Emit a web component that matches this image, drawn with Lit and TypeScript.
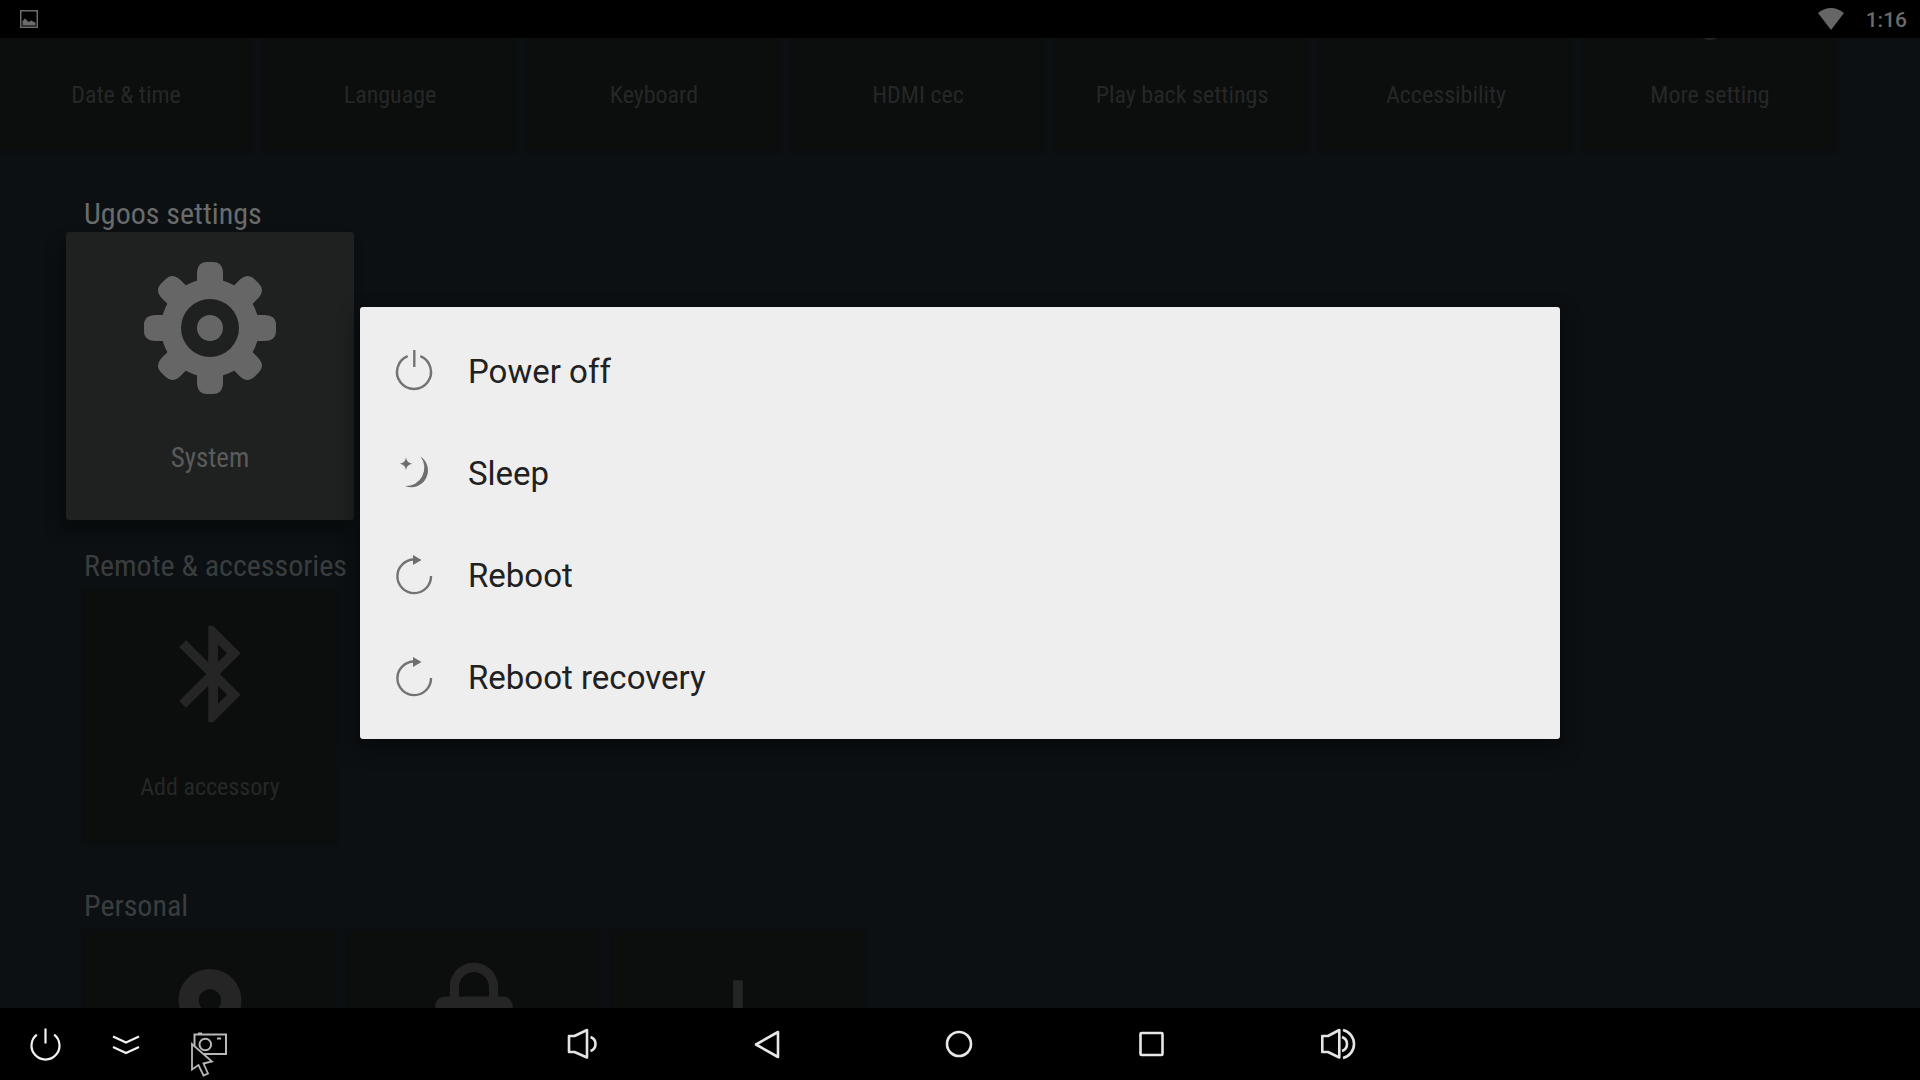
import { LitElement, html, css, svg } from "lit";
import { customElement, state } from "lit/decorators.js";

interface Card {
  label: string;
  icon?: string;
}

const cardIcons: Record<string, unknown> = {
  more: svg`<svg viewBox="0 0 116 116"><circle cx="58" cy="15" r="15"/><circle cx="58" cy="58" r="15"/><circle cx="58" cy="101" r="15"/></svg>`,
  gear: svg`<svg viewBox="-66 -66 132 132">
    <path fill-rule="evenodd" d="M0-49A49 49 0 0 1 0 49A49 49 0 0 1 0-49ZM0-29A29 29 0 0 0 0 29A29 29 0 0 0 0-29Z"/>
    ${[0, 45, 90, 135, 180, 225, 270, 315].map(
      (a) => svg`<path transform="rotate(${a})" d="M-13-43V-54Q-13-66-3-66H3Q13-66 13-54V-43Z"/>`
    )}
    <circle r="13"/></svg>`,
  bluetooth: svg`<svg viewBox="-0.64 0 24 24"><path d="M17.71 7.71L12 2h-1v7.59L6.41 5 5 6.41 10.59 12 5 17.59 6.41 19 11 14.41V22h1l5.71-5.71-4.3-4.29 4.3-4.29zM13 5.83l1.88 1.88L13 9.59V5.83zm1.88 10.46L13 18.17v-3.76l1.88 1.88z"/></svg>`,
  place: svg`<svg viewBox="-0.9 -0.9 25.8 25.8"><path d="M12 2C8.13 2 5 5.13 5 9c0 5.25 7 13 7 13s7-7.75 7-13c0-3.87-3.13-7-7-7zm0 9.5c-1.38 0-2.5-1.12-2.5-2.5s1.12-2.5 2.5-2.5 2.5 1.12 2.5 2.5-1.12 2.5-2.5 2.5z"/></svg>`,
  lock: svg`<svg viewBox="0 -0.4 24 24"><path d="M18 8h-1V6c0-2.76-2.24-5-5-5S7 3.24 7 6v2H6c-1.1 0-2 .9-2 2v10c0 1.1.9 2 2 2h12c1.1 0 2-.9 2-2V10c0-1.1-.9-2-2-2zM12 17c-1.1 0-2-.9-2-2s.9-2 2-2 2 .9 2 2-.9 2-2 2zm3.1-9H8.9V6c0-1.71 1.39-3.1 3.1-3.1 1.71 0 3.1 1.39 3.1 3.1v2z"/></svg>`,
  plus: svg`<svg viewBox="0 0 24 24"><path d="M19 13h-6v6h-2v-6H5v-2h6V5h2v6h6v2z"/></svg>`,
};

const rebootIcon = svg`<svg viewBox="0 0 48 48"><path class="line" d="M24 9.5A16.8 16.8 0 1 0 41 26"/><path class="solid" d="M23 5L31.5 10L23 15Z"/></svg>`;

const powerItems = [
  {
    label: "Power off",
    icon: svg`<svg viewBox="0 0 48 48"><path class="line" d="M17.7 10.2A17 17 0 1 0 30.3 10.2M24.3 4V21"/></svg>`,
  },
  {
    label: "Sleep",
    icon: svg`<svg viewBox="0 0 48 48"><path class="solid" d="M30.5 8.5A16.75 16.75 0 0 1 15 38A18.3 18.3 0 0 0 30.5 8.5ZM16 9.5Q16.8 14.9 22.2 15.7Q16.8 16.5 16 22Q15.2 16.5 9.8 15.7Q15.2 14.9 16 9.5Z"/></svg>`,
  },
  { label: "Reboot", icon: rebootIcon },
  { label: "Reboot recovery", icon: rebootIcon },
];

const toolButtons = [
  {
    label: "Power menu",
    icon: svg`<svg viewBox="0 0 48 48"><path d="M15.8 14.6A14 14 0 1 0 33.2 14.6M24.5 8.5V23.5"/></svg>`,
  },
  {
    label: "Hide bar",
    icon: svg`<svg viewBox="0 0 48 48"><path d="M10 16.5L23 22.5L36 16.5M10 27L23 33L36 27"/></svg>`,
  },
  {
    label: "Screenshot",
    icon: svg`<svg viewBox="0 0 48 48" class="dim"><path d="M9.5 14.5H41V34H9.5ZM13 13.5H17M32 18.5H36"/><circle cx="20.3" cy="24.5" r="5.8"/></svg>`,
  },
];

const navButtons = [
  {
    label: "Volume down",
    icon: svg`<svg viewBox="0 0 48 48" class="volume"><path d="M13 16H18.5L31 10V37.5L18.5 32H13ZM34.5 17A7.4 7.4 0 0 1 34.5 31"/></svg>`,
  },
  {
    label: "Back",
    icon: svg`<svg viewBox="0 0 48 48"><path class="key" d="M32 12V37L10 24.5Z"/></svg>`,
  },
  {
    label: "Home",
    icon: svg`<svg viewBox="0 0 48 48"><circle class="key" cx="23" cy="24" r="12"/></svg>`,
  },
  {
    label: "Recent apps",
    icon: svg`<svg viewBox="0 0 48 48"><rect class="key" x="14.5" y="13" width="22" height="22" rx="1"/></svg>`,
  },
  {
    label: "Volume up",
    icon: svg`<svg viewBox="0 0 48 48" class="volume"><path d="M6.3 16H12L23.3 10V37.5L12 32H6.3ZM26 17A7.4 7.4 0 0 1 26 31M27 10A14.4 14.4 0 0 1 27 38"/></svg>`,
  },
];

@customElement("app-root")
export class AppRoot extends LitElement {
  static styles = css`
    :host {
      display: block;
      font-family: Roboto, "Liberation Sans", sans-serif;
    }
    * {
      box-sizing: border-box;
    }
    button {
      border: 0;
      padding: 0;
      margin: 0;
      background: none;
      font: inherit;
      color: inherit;
      text-align: left;
    }
    svg {
      display: block;
    }
    .screen {
      display: grid;
      grid-template-rows: 38px minmax(0, 1fr) 72px;
      grid-template-columns: minmax(0, 1fr);
      height: 100vh;
      overflow: hidden;
      background: #0c1013;
    }
    .status {
      display: flex;
      align-items: center;
      gap: 22px;
      padding: 0 13px 0 20px;
      background: #000;
      color: #6b6b6b;
      font-size: 21px;
      font-weight: 500;
    }
    .status time {
      padding-top: 2px;
    }
    .shot {
      width: 18px;
      height: 18px;
      margin-right: auto;
    }
    .wifi {
      width: 26px;
      height: 22px;
    }
    .settings,
    .power {
      grid-row: 2;
      grid-column: 1;
    }
    .settings {
      overflow: hidden;
      font-family: "Roboto Condensed", "Liberation Sans Narrow", Roboto, sans-serif;
    }
    .row {
      display: flex;
      gap: 12px;
      padding-left: 84px;
    }
    .row.scrolled {
      margin-top: -140px;
      padding-left: 0;
    }
    .row.active {
      padding-left: 66px;
    }
    h2 {
      margin: 46px 0 6px 84px;
      font-size: 30px;
      line-height: 36px;
      font-weight: 400;
      color: #3a3d3e;
    }
    h2.active {
      margin-bottom: 0;
      color: #696b6c;
    }
    h2.after {
      margin-top: 28px;
    }
    .card {
      flex: none;
      display: flex;
      flex-direction: column;
      align-items: center;
      justify-content: flex-end;
      gap: 39px;
      width: 252px;
      height: 252px;
      padding-bottom: 39px;
      border-radius: 3px;
      background: #0b0e0d;
      box-shadow: -1px 1px 4px #0a0d0e;
      color: #262727;
      font-size: 24px;
      line-height: 32px;
    }
    .card span {
      min-height: 32px;
    }
    .card svg {
      width: 116px;
      height: 116px;
      fill: #252525;
    }
    .card.active {
      gap: 46px;
      width: 288px;
      height: 288px;
      padding-bottom: 44px;
      background: #1f2120;
      box-shadow: -6px 10px 14px #080b0c;
      color: #5a5b5b;
      font-size: 27px;
      line-height: 36px;
    }
    .card.active svg {
      width: 132px;
      height: 132px;
      fill: #666;
    }
    .power {
      place-self: center;
      width: 62.5%;
      padding: 12px 0;
      border-radius: 3px;
      background: #eee;
      box-shadow: 0 8px 20px #07090a;
      color: #212121;
      font-size: 33px;
      z-index: 1;
    }
    .item {
      display: flex;
      align-items: center;
      gap: 30px;
      width: 100%;
      height: 102px;
      padding: 0 30px;
    }
    .item span {
      padding-top: 2px;
    }
    .item svg {
      width: 48px;
      height: 48px;
    }
    .line {
      fill: none;
      stroke: #737373;
      stroke-width: 2.4;
    }
    .solid {
      fill: #6e6e6e;
    }
    .nav {
      position: relative;
      display: grid;
      grid-template-columns: 1fr auto 1fr;
      background: #000;
    }
    .tools {
      display: flex;
      gap: 10px;
      padding-left: 9px;
    }
    .keys {
      display: flex;
      gap: 118px;
    }
    .nav button {
      display: grid;
      place-items: center;
      width: 72px;
    }
    .nav button svg {
      width: 48px;
      height: 48px;
      fill: none;
      stroke: #f2f2f2;
      stroke-width: 2.2;
    }
    .nav button .dim {
      stroke: #b8b8b8;
      stroke-width: 2;
    }
    .nav button .volume {
      stroke: #e4e4e4;
      stroke-width: 2.6;
      stroke-linejoin: round;
    }
    .nav button .key {
      stroke: #e8e8e8;
      stroke-width: 2.6;
      stroke-linejoin: round;
    }
    .cursor {
      position: absolute;
      left: 190px;
      top: 33px;
      width: 24px;
      height: 36px;
      fill: #000;
      stroke: #b8b8b8;
      stroke-width: 1.8;
    }
  `;

  @state() private systemCards: Card[] = [
    { label: "Date & time" },
    { label: "Language" },
    { label: "Keyboard" },
    { label: "HDMI cec" },
    { label: "Play back settings" },
    { label: "Accessibility" },
    { label: "More setting", icon: "more" },
  ];

  private card(c: Card, active = false) {
    return html`<button class="card ${active ? "active" : ""}">
      ${c.icon ? cardIcons[c.icon] : ""}<span>${c.label}</span>
    </button>`;
  }

  render() {
    return html`
      <div class="screen">
        <header class="status">
          <svg class="shot" viewBox="0 0 18 18">
            <rect x="0.75" y="0.75" width="16.5" height="16.5" fill="none" stroke="#6b6b6b" stroke-width="1.5" />
            <path d="M2.5 15.5V11L5 8.5L8.5 12L11.5 10.5L13 11.5L15.5 12.5V15.5Z" fill="#6b6b6b" />
          </svg>
          <svg class="wifi" viewBox="0 0 26 22">
            <path d="M0 5Q13-5 26 5L13 22Z" fill="#666" />
          </svg>
          <time>1:16</time>
        </header>
        <main class="settings">
          <div class="row scrolled">${this.systemCards.map((c) => this.card(c))}</div>
          <h2 class="active">Ugoos settings</h2>
          <div class="row active">${this.card({ label: "System", icon: "gear" }, true)}</div>
          <h2 class="after">Remote &amp; accessories</h2>
          <div class="row">${this.card({ label: "Add accessory", icon: "bluetooth" })}</div>
          <h2>Personal</h2>
          <div class="row">
            ${["place", "lock", "plus"].map((icon) => this.card({ label: "", icon }))}
          </div>
        </main>
        <section class="power" role="dialog">
          ${powerItems.map((i) => html`<button class="item">${i.icon}<span>${i.label}</span></button>`)}
        </section>
        <nav class="nav">
          <div class="tools">
            ${toolButtons.map((b) => html`<button aria-label=${b.label}>${b.icon}</button>`)}
          </div>
          <div class="keys">
            ${navButtons.map((b) => html`<button aria-label=${b.label}>${b.icon}</button>`)}
          </div>
          <svg class="cursor" viewBox="0 0 24 36">
            <path d="M2 3V28.5L8.5 24L13.5 34.5L18 32.5L13.5 22.5L22 20.5Z" />
          </svg>
        </nav>
      </div>
    `;
  }
}
